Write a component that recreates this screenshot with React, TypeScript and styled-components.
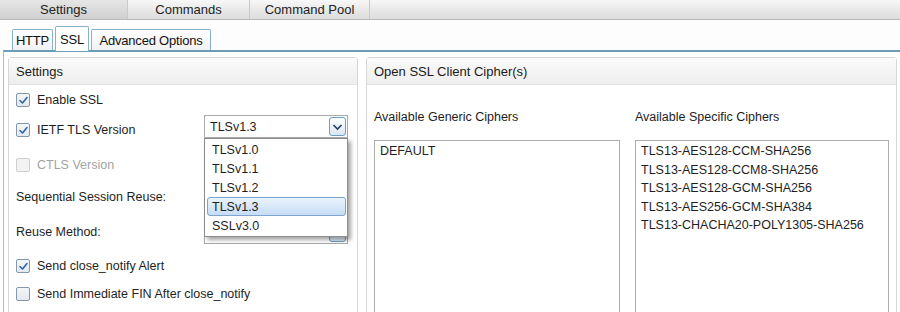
import React from 'react'
import styled, { createGlobalStyle } from 'styled-components'

const GlobalStyle = createGlobalStyle`
    *, *::before, *::after {
        box-sizing: border-box;
    }
    html, body {
        margin: 0;
        padding: 0;
        background: #ffffff;
        font-family: "Liberation Sans", Arial, sans-serif;
        font-size: 12.5px;
        color: #1e1e1e;
        overflow: hidden;
    }
`

const Page = styled.div`
    width: 900px;
    height: 312px;
    overflow: hidden;
    background: #fdfdfd;
`

const TopBar = styled.div`
    display: flex;
    height: 20px;
    background: linear-gradient(#f7f7f7, #e6e6e6 60%, #dcdcdc);
    border-bottom: 1px solid #b9b9b9;
`

const TopTab = styled.div<{ $active?: boolean; $w: number }>`
    width: ${p => p.$w}px;
    display: flex;
    align-items: center;
    justify-content: center;
    font-size: 13px;
    color: #222;
    border-right: 1px solid #c9c9c9;
    background: ${p => (p.$active ? 'linear-gradient(#e6e6e6, #d6d6d6 70%, #cfcfcf)' : 'transparent')};
`

const SubTabRow = styled.div`
    display: flex;
    align-items: flex-end;
    gap: 2px;
    height: 30px;
    padding-left: 12px;
    background: #fdfdfd;
`

const SubTab = styled.div<{ $active?: boolean; $w: number }>`
    width: ${p => p.$w}px;
    height: ${p => (p.$active ? 25 : 21)}px;
    display: flex;
    align-items: center;
    justify-content: center;
    font-size: 13px;
    letter-spacing: -0.2px;
    color: #111;
    border: 1px solid #86b1c6;
    border-bottom: none;
    border-radius: 2px 2px 0 0;
    background: ${p => (p.$active ? '#ffffff' : 'linear-gradient(#ffffff, #f1f1f1)')};
    margin-bottom: ${p => (p.$active ? -1 : 0)}px;
    position: relative;
`

const Pane = styled.div`
    display: flex;
    gap: 8px;
    margin-left: 3px;
    padding: 5px 0 0 4px;
    height: 270px;
    border-top: 2px solid #6d9db6;
    border-left: 1px solid #9fc0d2;
    background: #ffffff;
`

const GroupBox = styled.div<{ $w: number }>`
    width: ${p => p.$w}px;
    height: 280px;
    border: 1px solid #d6d6d6;
    border-radius: 3px;
    background: #ffffff;
    display: flex;
    flex-direction: column;
    flex-shrink: 0;
`

const GroupHeader = styled.div`
    height: 27px;
    display: flex;
    align-items: center;
    padding-left: 7px;
    font-size: 13px;
    color: #1a1a1a;
    background: linear-gradient(#fbfbfb, #eeeeee);
    border-bottom: 1px solid #e2e2e2;
`

const LeftBody = styled.div`
    padding: 0 9px 0 7px;
`

const Row = styled.div<{ $h: number }>`
    height: ${p => p.$h}px;
    display: grid;
    grid-template-columns: 188px 144px;
    align-items: center;
`

const CheckLabel = styled.label<{ $disabled?: boolean }>`
    display: flex;
    align-items: center;
    gap: 7px;
    white-space: nowrap;
    color: ${p => (p.$disabled ? '#a3a3a3' : '#1e1e1e')};
`

const Box = styled.span<{ $disabled?: boolean }>`
    flex-shrink: 0;
    width: 14px;
    height: 14px;
    border: 1px solid ${p => (p.$disabled ? '#cfcfcf' : '#8497a9')};
    border-radius: 2px;
    background: ${p => (p.$disabled ? '#f2f2f2' : 'linear-gradient(#f4f6f8, #e3e8ee)')};
    display: flex;
    align-items: center;
    justify-content: center;
`

const PlainLabel = styled.span`
    white-space: nowrap;
`

const SelectWrap = styled.div<{ $mt: number }>`
    position: relative;
    align-self: start;
    margin-top: ${p => p.$mt}px;
`

const SelectBox = styled.div`
    height: 23px;
    border: 1px solid #a9a9a9;
    background: #ffffff;
    display: flex;
    align-items: center;
    justify-content: space-between;
    padding: 0 1px 0 5px;
`

const ArrowBtn = styled.span`
    width: 17px;
    height: 19px;
    border: 1px solid #6e9cc2;
    border-radius: 3px;
    background: linear-gradient(#ffffff, #dce7f2);
    display: flex;
    align-items: center;
    justify-content: center;
`

const Popup = styled.div`
    position: absolute;
    top: 100%;
    left: 0;
    width: 144px;
    border: 1px solid #8c8c8c;
    background: #ffffff;
    box-shadow: 3px 3px 4px rgba(0, 0, 0, 0.35);
    padding: 1px 0;
    z-index: 5;
`

const PopupItem = styled.div<{ $selected?: boolean }>`
    height: 19px;
    margin: 0 1px 0 2px;
    padding-left: 4px;
    display: flex;
    align-items: center;
    border: 1px solid ${p => (p.$selected ? '#7ea4cf' : 'transparent')};
    border-radius: 3px;
    background: ${p => (p.$selected ? 'linear-gradient(#eaf3fc, #c6ddf5)' : 'transparent')};
`

const RightBody = styled.div`
    padding: 24px 7px 0 7px;
    display: grid;
    grid-template-columns: 246px 254px;
    column-gap: 15px;
`

const ListLabel = styled.div`
    height: 16px;
    line-height: 16px;
    margin-bottom: 15px;
    white-space: nowrap;
`

const ListBox = styled.div`
    height: 180px;
    border: 1px solid #acacac;
    border-bottom: none;
    padding: 1px 0 0 5px;
    line-height: 18.5px;
    white-space: nowrap;
`

const Check = () => (
    <svg width="11" height="11" viewBox="0 0 11 11">
        <path d="M2 5.5 L4.5 8 L9 2.5" fill="none" stroke="#2f67a3" strokeWidth="1.6" strokeLinecap="round" strokeLinejoin="round" />
    </svg>
)

const Chevron = () => (
    <svg width="11" height="8" viewBox="0 0 11 8">
        <path d="M1.5 2 L5.5 6 L9.5 2" fill="none" stroke="#1f3f66" strokeWidth="1.6" />
    </svg>
)

function CheckBox({ label, checked, disabled }: { label: string; checked?: boolean; disabled?: boolean }) {
    return (
        <CheckLabel $disabled={disabled}>
            <Box $disabled={disabled}>{checked && <Check />}</Box>
            {label}
        </CheckLabel>
    )
}

function Select({ value, open, mt = 0 }: { value: string; open?: boolean; mt?: number }) {
    const options = ['TLSv1.0', 'TLSv1.1', 'TLSv1.2', 'TLSv1.3', 'SSLv3.0']
    return (
        <SelectWrap $mt={mt}>
            <SelectBox>
                <span>{value}</span>
                <ArrowBtn><Chevron /></ArrowBtn>
            </SelectBox>
            {open && (
                <Popup>
                    {options.map(o => (
                        <PopupItem key={o} $selected={o === value}>{o}</PopupItem>
                    ))}
                </Popup>
            )}
        </SelectWrap>
    )
}

const specific = [
    'TLS13-AES128-CCM-SHA256',
    'TLS13-AES128-CCM8-SHA256',
    'TLS13-AES128-GCM-SHA256',
    'TLS13-AES256-GCM-SHA384',
    'TLS13-CHACHA20-POLY1305-SHA256',
]

export default function App() {
    return (
        <Page>
            <GlobalStyle />
            <TopBar>
                <TopTab $active $w={128}>Settings</TopTab>
                <TopTab $w={122}>Commands</TopTab>
                <TopTab $w={120}>Command Pool</TopTab>
            </TopBar>
            <SubTabRow>
                <SubTab $w={41}>HTTP</SubTab>
                <SubTab $w={34} $active>SSL</SubTab>
                <SubTab $w={120}>Advanced Options</SubTab>
            </SubTabRow>
            <Pane>
                <GroupBox $w={350}>
                    <GroupHeader>Settings</GroupHeader>
                    <LeftBody>
                        <Row $h={30}><CheckBox label="Enable SSL" checked /></Row>
                        <Row $h={30}>
                            <CheckBox label="IETF TLS Version" checked />
                            <Select value="TLSv1.3" open />
                        </Row>
                        <Row $h={40}><CheckBox label="CTLS Version" disabled /></Row>
                        <Row $h={24}>
                            <PlainLabel>Sequential Session Reuse:</PlainLabel>
                            <Select value="" />
                        </Row>
                        <Row $h={46}>
                            <PlainLabel>Reuse Method:</PlainLabel>
                            <Select value="" mt={12} />
                        </Row>
                        <Row $h={22}><CheckBox label="Send close_notify Alert" checked /></Row>
                        <Row $h={34}><CheckBox label="Send Immediate FIN After close_notify" /></Row>
                    </LeftBody>
                </GroupBox>
                <GroupBox $w={531}>
                    <GroupHeader>Open SSL Client Cipher(s)</GroupHeader>
                    <RightBody>
                        <div>
                            <ListLabel>Available Generic Ciphers</ListLabel>
                            <ListBox><div>DEFAULT</div></ListBox>
                        </div>
                        <div>
                            <ListLabel>Available Specific Ciphers</ListLabel>
                            <ListBox>
                                {specific.map(c => <div key={c}>{c}</div>)}
                            </ListBox>
                        </div>
                    </RightBody>
                </GroupBox>
            </Pane>
        </Page>
    )
}
